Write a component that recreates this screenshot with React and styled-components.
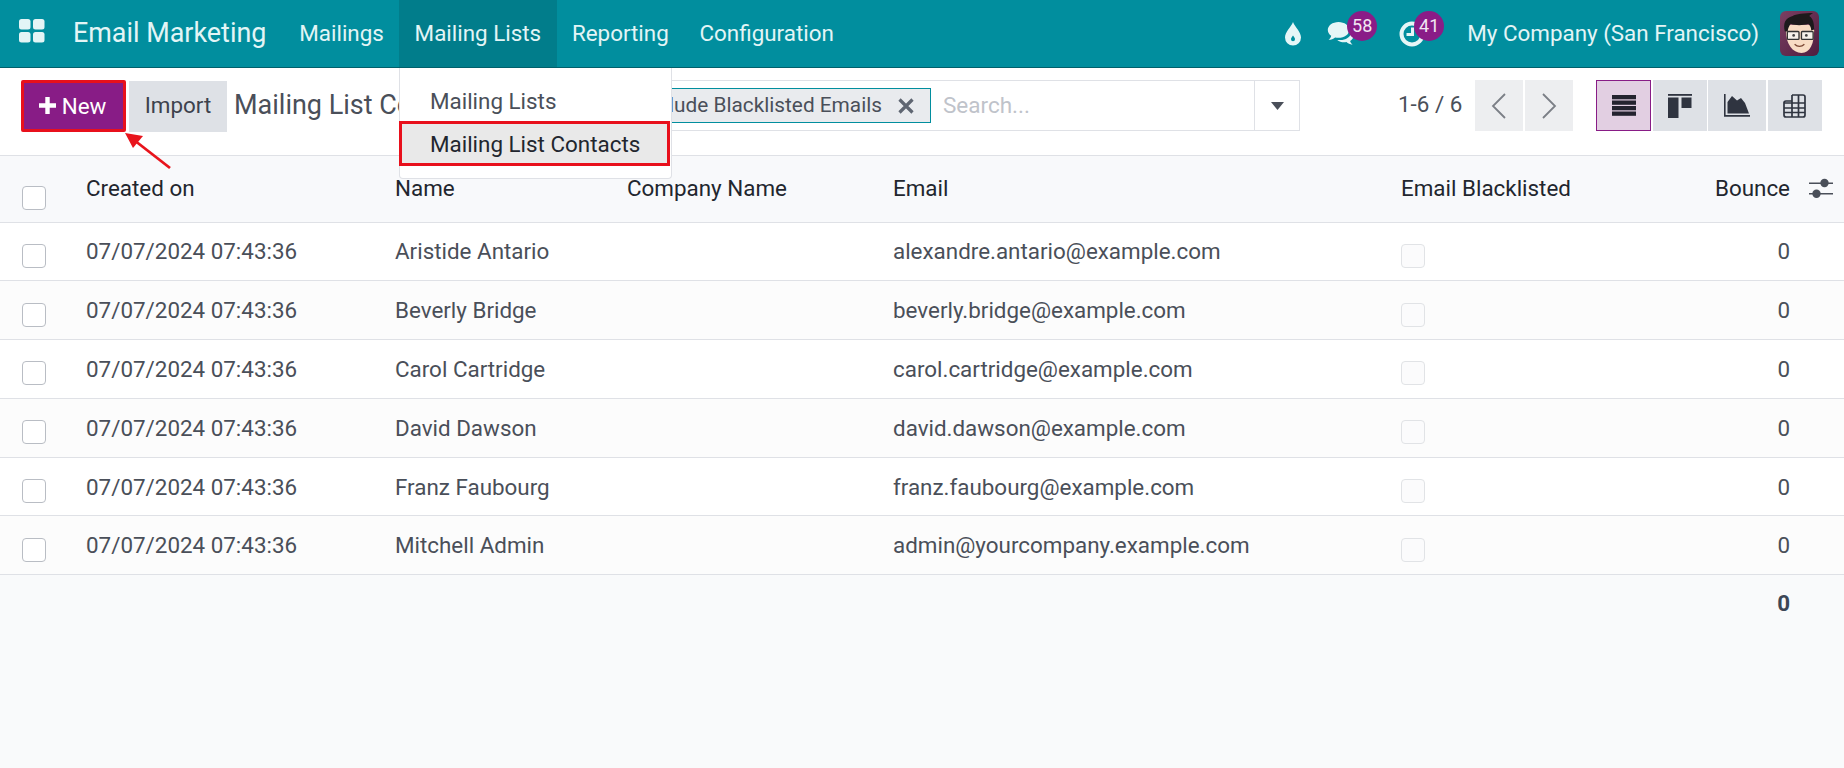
import React from "react";
import styled, { createGlobalStyle } from "styled-components";

const rows = [
  { name: "Aristide Antario", email: "alexandre.antario@example.com" },
  { name: "Beverly Bridge", email: "beverly.bridge@example.com" },
  { name: "Carol Cartridge", email: "carol.cartridge@example.com" },
  { name: "David Dawson", email: "david.dawson@example.com" },
  { name: "Franz Faubourg", email: "franz.faubourg@example.com" },
  { name: "Mitchell Admin", email: "admin@yourcompany.example.com" },
];

const App = () => {
  return (
    <Page>
      <GlobalStyle />
      <NavBar>
        <AppsIcon viewBox="0 0 26 24">
          <rect x="0" y="0" width="11.5" height="10.5" rx="2.5" />
          <rect x="14" y="0" width="11.5" height="10.5" rx="2.5" />
          <rect x="0" y="13" width="11.5" height="10.5" rx="2.5" />
          <rect x="14" y="13" width="11.5" height="10.5" rx="2.5" />
        </AppsIcon>
        <Brand>Email Marketing</Brand>
        <NavItem>Mailings</NavItem>
        <NavItem $active>Mailing Lists</NavItem>
        <NavItem>Reporting</NavItem>
        <NavItem>Configuration</NavItem>
        <NavRight>
          <DropIcon viewBox="0 0 18 24">
            <path
              fillRule="evenodd"
              d="M9 0C11 5 17 10 17 15.5A8 8 0 0 1 1 15.5C1 10 7 5 9 0ZM9 13.5C8 15 7 16 7 17.2A2 2 0 0 0 11 17.2C11 16 10 15 9 13.5Z"
            />
          </DropIcon>
          <IconBadge $w={50}>
            <svg width="28" height="25" viewBox="0 0 28 25" fill="#e6f6f7">
              <path d="M11.5 1C5.5 1 .8 4.6.8 9c0 2.4 1.4 4.4 3.4 5.8-.3 1.6-1.3 3-2.6 4 2.5-.2 4.800-1 6.500-2.400 1 .2 2.200.400 3.400.400 6 0 10.700-3.400 10.700-7.800S17.500 1 11.500 1Z" />
              <path d="M24.500 11.500c-1.300 5-6.500 8-12.500 7.500l-1.800-.100c1.800 1.600 4.300 2.400 7 2.400.800 0 1.500-.100 2.200-.200 1.500 1.400 3.600 2.300 6.100 2.600-1.200-.900-2-2.200-2.400-3.600 2-1.200 3.400-3 3.400-5 0-1-.600-2-1.500-2.600Z" />
            </svg>
            <Badge $left={20}>58</Badge>
          </IconBadge>
          <IconBadge $w={46}>
            <svg width="26" height="26" viewBox="0 0 26 26" fill="none" stroke="#e6f6f7">
              <circle cx="13" cy="13" r="10.500" strokeWidth="4" />
              <path d="M13.500 6.500v7h-6" strokeWidth="3" />
            </svg>
            <Badge $left={15}>41</Badge>
          </IconBadge>
          <CompanyName>My Company (San Francisco)</CompanyName>
          <Avatar viewBox="0 0 40 46">
            <defs>
              <linearGradient id="avatarBg" x1="0" y1="0" x2="1" y2="1">
                <stop offset="0" stopColor="#7b3f62" />
                <stop offset="1" stopColor="#4f1d3f" />
              </linearGradient>
            </defs>
            <rect width="40" height="46" rx="6" fill="url(#avatarBg)" />
            <path d="M6 20c0 14 7 23 16 23s13-10 13-23l-2-6H9Z" fill="#f8dcc4" />
            <path d="M5 21c-2-8 0-14 8-16 3-2 12-3 21-3-2 1-3 2-4 3 4 2 5 8 5 14l-3 1c0-3-1-5-3-7-6 2-13 2-18 0-2 3-3 5-3 8Z" fill="#1d1a1c" />
            <rect x="7.500" y="21" width="12" height="8" rx="1" fill="#f6f1ea" stroke="#333" strokeWidth="1.400" />
            <rect x="22" y="21" width="12" height="8" rx="1" fill="#f6f1ea" stroke="#333" strokeWidth="1.400" />
            <circle cx="14" cy="25" r="1.400" fill="#444" />
            <circle cx="27" cy="25" r="1.400" fill="#444" />
            <path d="M15 34c3 3 7 3 10 0" fill="none" stroke="#7a4632" strokeWidth="1.300" />
          </Avatar>
        </NavRight>
      </NavBar>

      <Toolbar>
        <ActionGroup>
          <NewButton>
            <svg width="17" height="17" viewBox="0 0 17 17" fill="#fff">
              <path d="M6.300 0h4.400v6.300H17v4.400h-6.300V17H6.300v-6.300H0V6.300h6.300Z" />
            </svg>
            New
          </NewButton>
          <GreyButton>Import</GreyButton>
          <PageTitle>Mailing List Contacts</PageTitle>
        </ActionGroup>

        <SearchBox>
          <Facet>
            Exclude Blacklisted Emails
            <svg width="16" height="16" viewBox="0 0 16 16" stroke="#5f6672" strokeWidth="3.200">
              <path d="M1.500 1.500l13 13M14.500 1.500l-13 13" />
            </svg>
          </Facet>
          <SearchInput>Search...</SearchInput>
          <SearchCaret>
            <svg width="13" height="8" viewBox="0 0 13 8" fill="#4a4f59">
              <path d="M0 0h13L6.500 8Z" />
            </svg>
          </SearchCaret>
        </SearchBox>

        <PagerLabel>1-6 / 6</PagerLabel>
        <PagerGroup>
          <PagerButton>
            <svg width="16" height="26" viewBox="0 0 16 26" fill="none" stroke="#7b7f86" strokeWidth="1.800">
              <path d="M14 1L2 13l12 12" />
            </svg>
          </PagerButton>
          <PagerButton>
            <svg width="16" height="26" viewBox="0 0 16 26" fill="none" stroke="#7b7f86" strokeWidth="1.800">
              <path d="M2 1l12 12L2 25" />
            </svg>
          </PagerButton>
        </PagerGroup>

        <ViewGroup>
          <ViewButton $w={55} $active>
            <svg width="24" height="21" viewBox="0 0 24 21" fill="#24232f">
              <rect width="24" height="4.300" />
              <rect y="5.500" width="24" height="4.300" />
              <rect y="11" width="24" height="4.300" />
              <rect y="16.500" width="24" height="4.300" />
            </svg>
          </ViewButton>
          <ViewButton $w={54}>
            <svg width="24" height="24" viewBox="0 0 24 24" fill="#2f3440">
              <rect width="24" height="1.800" />
              <rect y="3.500" width="10.500" height="20.500" />
              <rect x="13.500" y="3.500" width="10" height="10.500" />
            </svg>
          </ViewButton>
          <ViewButton $w={58}>
            <svg width="26" height="23" viewBox="0 0 26 23" fill="#2f3440">
              <path d="M0 0h1.600v21H26v1.800H0Z" />
              <path d="M3.500 19.500V8L8 2l5 4.500L17 4l4 5 4 10.500Z" />
            </svg>
          </ViewButton>
          <ViewButton $w={54}>
            <svg width="23" height="24" viewBox="0 0 23 24" fill="none" stroke="#2f3440" strokeWidth="1.700">
              <path d="M9 1h11a2 2 0 0 1 2 2v18a2 2 0 0 1-2 2H3a2 2 0 0 1-2-2V9h21M9 1v22M15.500 1v22M1 9a2 2 0 0 1 2-2h6M1 14h21M1 18.500h21" />
            </svg>
          </ViewButton>
        </ViewGroup>
      </Toolbar>

      <Table>
        <HeaderRow>
          <CheckCell $top={18}>
            <CheckBox />
          </CheckCell>
          <HeaderCell>Created on</HeaderCell>
          <HeaderCell>Name</HeaderCell>
          <HeaderCell>Company Name</HeaderCell>
          <HeaderCell>Email</HeaderCell>
          <HeaderCell>Email Blacklisted</HeaderCell>
          <HeaderCell $right>Bounce</HeaderCell>
          <SettingsCell>
            <svg width="24" height="21" viewBox="0 0 24 21" fill="#4a4f59">
              <rect y="4.500" width="24" height="1.500" />
              <circle cx="15.500" cy="5" r="4.200" />
              <rect y="15" width="24" height="1.500" />
              <circle cx="7.500" cy="15.700" r="4.200" />
            </svg>
          </SettingsCell>
        </HeaderRow>
        {rows.map((row, i) => (
          <BodyRow key={row.email} $striped={i % 2 === 1}>
            <CheckCell $top={9}>
              <CheckBox />
            </CheckCell>
            <BodyCell>07/07/2024 07:43:36</BodyCell>
            <BodyCell>{row.name}</BodyCell>
            <BodyCell />
            <BodyCell>{row.email}</BodyCell>
            <BodyCell>
              <FlagBox />
            </BodyCell>
            <BodyCell $right>0</BodyCell>
          </BodyRow>
        ))}
        <TotalRow>0</TotalRow>
      </Table>

      <DropMenu>
        <MenuItem>Mailing Lists</MenuItem>
        <MenuItem $selected>Mailing List Contacts</MenuItem>
      </DropMenu>

      <ArrowMark width="54" height="40" viewBox="0 0 54 40">
        <path d="M46 37L10 9" stroke="#e8141c" strokeWidth="2.800" fill="none" />
        <path d="M1 2l18 3-10 12Z" fill="#e8141c" />
      </ArrowMark>
    </Page>
  );
};

const GlobalStyle = createGlobalStyle`
  html, body {
    margin: 0;
    padding: 0;
    background: #f9fafb;
    font-family: "Roboto", "Liberation Sans", sans-serif;
  }
  * {
    box-sizing: border-box;
  }
`;

const Page = styled.div`
  position: relative;
  width: 1844px;
  height: 768px;
  overflow: hidden;
  background: #f9fafb;
  font-size: 22.400px;
  color: #4a4f59;
`;

const NavBar = styled.div`
  display: flex;
  align-items: stretch;
  height: 68px;
  padding-left: 19px;
  background: #018e9e;
  border-bottom: 1px solid #01606b;
  color: #e3f5f6;
`;

const AppsIcon = styled.svg`
  width: 26px;
  height: 24px;
  align-self: center;
  margin-top: -5px;
  fill: #e3f5f6;
`;

const Brand = styled.div`
  display: flex;
  align-items: center;
  margin-left: 28px;
  margin-right: 17.500px;
  padding-bottom: 2px;
  font-size: 26.900px;
`;

const NavItem = styled.div`
  display: flex;
  align-items: center;
  padding: 0 15.400px 2px;
  background: ${(p) => (p.$active ? "#017d8b" : "transparent")};
`;

const NavRight = styled.div`
  display: flex;
  align-items: center;
  margin-left: auto;
  padding-right: 25px;
`;

const DropIcon = styled.svg`
  width: 18px;
  height: 24px;
  fill: #e6f6f7;
  margin-right: 25px;
`;

const IconBadge = styled.div`
  position: relative;
  display: flex;
  align-items: center;
  width: ${(p) => p.$w}px;
  height: 40px;
  margin-right: 22px;
`;

const Badge = styled.span`
  position: absolute;
  top: -3px;
  left: ${(p) => p.$left}px;
  width: 30px;
  height: 30px;
  border-radius: 50%;
  background: #8a1c87;
  color: #f2e6f2;
  font-size: 18px;
  line-height: 29px;
  text-align: center;
`;

const CompanyName = styled.div`
  margin-right: 21px;
  padding-bottom: 2px;
`;

const Avatar = styled.svg`
  width: 39px;
  height: 45px;
`;

const Toolbar = styled.div`
  display: flex;
  align-items: flex-start;
  height: 88px;
  padding: 12px 22px 0 21px;
  background: #fff;
  border-bottom: 1px solid #dfe1e6;
`;

const ActionGroup = styled.div`
  display: flex;
  align-items: center;
  flex: none;
  width: 461px;
`;

const NewButton = styled.div`
  display: flex;
  align-items: center;
  justify-content: center;
  flex: none;
  gap: 6px;
  width: 105px;
  height: 52px;
  padding: 0 2px 1px 0;
  background: #881c86;
  border: 3px solid #e8101c;
  border-radius: 2px;
  color: #fff;
`;

const GreyButton = styled.div`
  display: flex;
  align-items: center;
  justify-content: center;
  flex: none;
  width: 98px;
  height: 51px;
  margin-left: 3px;
  padding-bottom: 2px;
  background: #dee1e6;
  color: #3d424d;
`;

const PageTitle = styled.div`
  margin-left: 7px;
  padding-bottom: 3px;
  font-size: 27px;
  color: #4a4f59;
  white-space: nowrap;
`;

const SearchBox = styled.div`
  display: flex;
  align-items: center;
  flex: none;
  width: 818px;
  height: 51px;
  background: #fff;
  border: 1px solid #dfe1e6;
  border-left: 0;
`;

const Facet = styled.div`
  display: flex;
  align-items: center;
  justify-content: flex-end;
  gap: 16px;
  width: 449px;
  height: 35px;
  padding-right: 16px;
  background: #e9ebee;
  border: 1px solid #018e9e;
  color: #4a4f59;
  font-size: 20.800px;
  line-height: 31px;
`;

const SearchInput = styled.div`
  flex: 1;
  padding: 0 0 2px 12px;
  color: #bfc3ca;
  font-size: 22.500px;
`;

const SearchCaret = styled.div`
  display: flex;
  align-items: center;
  justify-content: center;
  width: 45px;
  height: 100%;
  border-left: 1px solid #dfe1e6;
`;

const PagerLabel = styled.div`
  flex: none;
  width: 77px;
  height: 51px;
  margin-left: 98px;
  line-height: 49px;
  color: #4a4f59;
`;

const PagerGroup = styled.div`
  display: flex;
  gap: 2px;
`;

const PagerButton = styled.div`
  display: flex;
  align-items: center;
  justify-content: center;
  width: 48px;
  height: 51px;
  background: #edeef0;
`;

const ViewGroup = styled.div`
  display: flex;
  gap: 1.500px;
  margin-left: 23px;
`;

const ViewButton = styled.div`
  display: flex;
  align-items: center;
  justify-content: center;
  width: ${(p) => p.$w}px;
  height: 51px;
  background: ${(p) => (p.$active ? "#e2cfe2" : "#dee1e6")};
  border: ${(p) => (p.$active ? "1px solid #881c86" : "0")};
`;

const Table = styled.div`
  display: flex;
  flex-direction: column;
`;

const columns = "86px 309px 232px 266px 508px 260px 129px 54px";

const HeaderRow = styled.div`
  display: grid;
  grid-template-columns: ${columns};
  align-items: center;
  height: 66.500px;
  background: #f8f9fb;
  border-bottom: 1px solid #dfe1e6;
  color: #22262e;
`;

const BodyRow = styled.div`
  display: grid;
  grid-template-columns: ${columns};
  align-items: center;
  height: 58.800px;
  background: ${(p) => (p.$striped ? "#fcfcfc" : "#fff")};
  border-bottom: 1px solid #dfe1e6;
`;

const HeaderCell = styled.div`
  white-space: nowrap;
  padding-bottom: 1px;
  text-align: ${(p) => (p.$right ? "right" : "left")};
`;

const BodyCell = styled.div`
  white-space: nowrap;
  text-align: ${(p) => (p.$right ? "right" : "left")};
`;

const CheckCell = styled.div`
  padding-left: 22px;
  padding-top: ${(p) => p.$top}px;
`;

const SettingsCell = styled.div`
  display: flex;
  padding-left: 19px;
`;

const CheckBox = styled.div`
  width: 24px;
  height: 24px;
  background: #fff;
  border: 1px solid #b9bdc4;
  border-radius: 4px;
`;

const FlagBox = styled.div`
  width: 24px;
  height: 24px;
  margin-top: 9px;
  background: #fbfbfc;
  border: 1px solid #e1e3e6;
  border-radius: 4px;
`;

const TotalRow = styled.div`
  width: 1790px;
  padding-top: 15px;
  text-align: right;
  font-weight: 700;
  color: #3d4756;
`;

const DropMenu = styled.div`
  position: absolute;
  top: 68px;
  left: 399px;
  width: 273px;
  height: 111px;
  padding-top: 15px;
  background: #fff;
  border: 1px solid #dfe1e6;
  border-top: 0;
  border-radius: 0 0 4px 4px;
`;

const MenuItem = styled.div`
  display: flex;
  align-items: center;
  height: ${(p) => (p.$selected ? "45px" : "35px")};
  margin-top: ${(p) => (p.$selected ? "3px" : "0")};
  padding-left: 30px;
  background: ${(p) => (p.$selected ? "#e9e9e9" : "transparent")};
  color: ${(p) => (p.$selected ? "#22262e" : "#4a4f59")};
  ${(p) =>
    p.$selected &&
    "border: 3px solid #e8101c; margin-left: -1px; width: 271px; padding-left: 28px;"}
`;

const ArrowMark = styled.svg`
  position: absolute;
  top: 131px;
  left: 124px;
`;

export default App;
